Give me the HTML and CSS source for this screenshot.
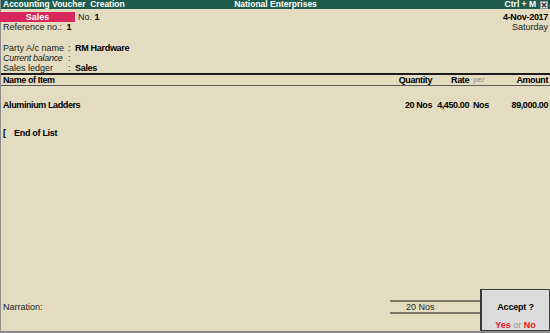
FILE: index.html
```html
<!DOCTYPE html>
<html lang="en">
<head>
    <meta charset="UTF-8">
    <meta name="viewport" content="width=device-width, initial-scale=1.0">
    <title>Accounting Voucher Creation</title>
    <link rel="stylesheet" href="styles.css">
</head>
<body>
    <div class="window">
        <div class="titlebar">
            <span class="title-left">Accounting Voucher&nbsp; Creation</span>
            <span class="title-mid">National Enterprises</span>
            <span class="title-right">Ctrl + M
                <svg class="close-box" width="8" height="8" viewBox="0 0 8 8">
                    <rect x="0.5" y="0.5" width="7" height="7" fill="#d8d8d8" stroke="#9a9a9a"/>
                    <path d="M2 2 L6 6 M6 2 L2 6" stroke="#333" stroke-width="1.2"/>
                </svg>
            </span>
        </div>

        <div class="voucher-head">
            <div class="head-left">
                <div class="type-row">
                    <span class="voucher-type">Sales</span>
                    <span class="voucher-no">No. <b>1</b></span>
                </div>
                <div class="ref-row">Reference no.: <b class="ref-no">1</b></div>
            </div>
            <div class="head-right">
                <div class="date">4-Nov-2017</div>
                <div class="day">Saturday</div>
            </div>
        </div>

        <div class="party">
            <div class="field"><span class="label">Party A/c name</span><span class="colon">:</span><b>RM Hardware</b></div>
            <div class="field"><span class="label italic">Current balance</span><span class="colon">:</span></div>
            <div class="field"><span class="label">Sales ledger</span><span class="colon">:</span><b>Sales</b></div>
        </div>

        <div class="items">
            <div class="item-grid items-head">
                <span>Name of Item</span>
                <span class="num">Quantity</span>
                <span class="num">Rate</span>
                <span class="per">per</span>
                <span class="num">Amount</span>
            </div>
            <div class="item-grid item-row">
                <span>Aluminium Ladders</span>
                <span class="num">20 Nos</span>
                <span class="num">4,450.00</span>
                <span class="per-val">Nos</span>
                <span class="num">89,000.00</span>
            </div>
            <div class="end-list"><span class="bracket">[</span>End of List</div>
        </div>

        <div class="footer">
            <div class="narration">Narration:</div>
            <div class="totals">20 Nos</div>
            <div class="accept">
                <div class="accept-q">Accept ?</div>
                <div class="accept-a"><span class="red">Yes</span> <span class="or">or</span> <span class="red">No</span></div>
            </div>
        </div>
    </div>
</body>
</html>
```

FILE: styles.css
```css
body {
    margin: 0;
    background-color: #e3dcc0;
    font-family: 'Liberation Sans', Arial, sans-serif;
    font-size: 9px;
    color: #222;
}
.window {
    height: 333px;
    box-sizing: border-box;
    border-left: 1px solid #8c8c8c;
    border-bottom: 2px solid #8c8c8c;
    display: flex;
    flex-direction: column;
}
b {
    color: #000;
    letter-spacing: -0.3px;
}
.titlebar {
    height: 9px;
    line-height: 9px;
    background-color: #1f5c4b;
    color: #fff;
    font-weight: bold;
    font-size: 8.5px;
    display: flex;
    padding: 0 2px 0 2px;
}
.title-left {
    flex: 1;
}
.title-mid {
    flex: 1;
    text-align: center;
}
.title-right {
    flex: 1;
    display: flex;
    justify-content: flex-end;
    align-items: center;
    gap: 4px;
}
.close-box {
    display: block;
}
.voucher-head {
    display: flex;
    justify-content: space-between;
    margin-top: 3px;
    line-height: 10px;
    padding-right: 2px;
}
.type-row {
    display: flex;
    align-items: center;
}
.voucher-type {
    width: 75px;
    height: 10px;
    background-color: #d8275a;
    color: #fff;
    font-weight: bold;
    text-align: center;
    margin-left: -1px;
}
.voucher-no {
    margin-left: 3px;
}
.ref-row {
    padding-left: 2px;
}
.ref-no {
    margin-left: 2px;
}
.head-right {
    text-align: right;
}
.date {
    font-weight: bold;
    color: #000;
    letter-spacing: -0.3px;
}
.party {
    margin-top: 11px;
    line-height: 10px;
    padding-left: 2px;
}
.field {
    display: flex;
    white-space: nowrap;
}
.label {
    width: 65px;
    flex-shrink: 0;
}
.italic {
    font-style: italic;
    letter-spacing: -0.3px;
}
.colon {
    width: 7px;
    flex-shrink: 0;
}
.items {
    flex: 1;
    border-top: 2px solid #1c1c1c;
}
.item-grid {
    display: grid;
    grid-template-columns: 1fr 40px 37px 31px 48px;
    padding: 0 2px 0 2px;
    line-height: 10px;
    font-weight: bold;
    color: #000;
    letter-spacing: -0.4px;
}
.items-head {
    border-bottom: 1px solid #5a5a5a;
}
.num {
    text-align: right;
}
.per {
    padding-left: 4px;
    font-weight: normal;
    color: #888;
    font-size: 8px;
    letter-spacing: 0;
}
.per-val {
    padding-left: 4px;
}
.item-row {
    margin-top: 14px;
}
.end-list {
    margin-top: 18px;
    line-height: 10px;
    padding-left: 2px;
    font-weight: bold;
    color: #000;
    letter-spacing: -0.3px;
}
.bracket {
    display: inline-block;
    width: 11px;
}
.footer {
    display: flex;
    align-items: flex-end;
}
.narration {
    flex: 1;
    padding-left: 2px;
    line-height: 10px;
    margin-bottom: 19px;
}
.totals {
    width: 90px;
    box-sizing: border-box;
    padding-left: 16px;
    border-top: 2px solid #7a7766;
    border-bottom: 2px solid #7a7766;
    line-height: 10px;
    margin-bottom: 17px;
}
.accept {
    width: 70px;
    height: 42px;
    background-color: #dcdcdc;
    border: 1px solid #3a3a3a;
    border-left-width: 2px;
    text-align: center;
    display: flex;
    flex-direction: column;
    justify-content: space-between;
    padding: 12px 0 0;
    box-sizing: border-box;
    line-height: 10px;
}
.accept-q {
    font-weight: bold;
    color: #000;
    letter-spacing: -0.2px;
}
.accept-a {
    font-weight: bold;
}
.red {
    color: #e8121e;
}
.or {
    color: #999;
    font-weight: normal;
}
```
